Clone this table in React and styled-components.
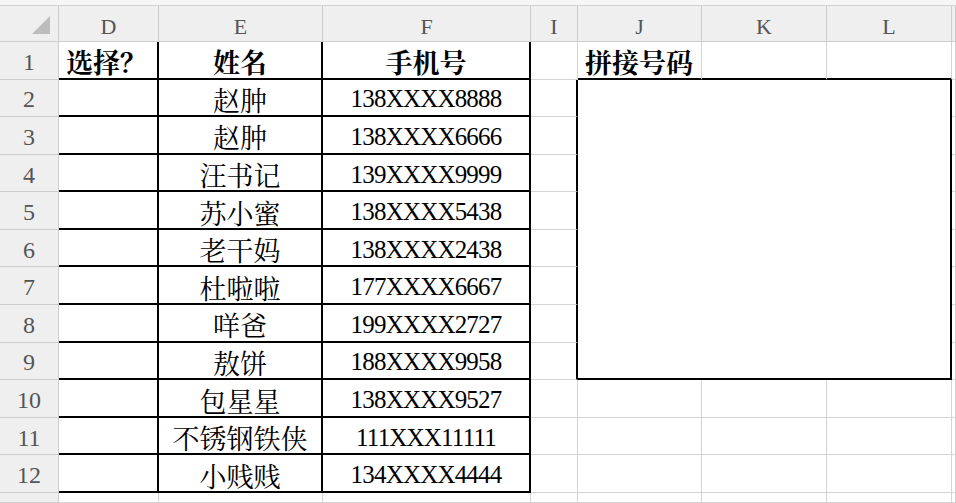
import React from "react";
import styled, { createGlobalStyle } from "styled-components";

const Global = createGlobalStyle`
  html, body { margin: 0; padding: 0; background: #ffffff; }
  body { width: 956px; height: 503px; overflow: hidden; }
`;

const CELL_FONT = `"Liberation Serif", "Noto Serif CJK SC", "Noto Sans CJK SC", serif`;
const GRID = "#d4d4d4";
const HEAD_LINE = "#cdcdcd";

const Page = styled.div`
  width: 956px;
  height: 503px;
  display: flex;
  flex-direction: column;
  background: #fff;
  overflow: hidden;
`;

const TopStrip = styled.div`
  height: 5px;
  flex: none;
  background: #f6f6f6;
  border-bottom: 1px solid #d2d2d2;
`;

const Sheet = styled.div`
  flex: 1;
  display: grid;
  grid-template-columns: 59px 100px 164px 208px 47px 124px 125px 125px 1fr;
  grid-template-rows: 36px repeat(12, 37.58px) 1fr;
`;

const Corner = styled.div`
  box-sizing: border-box;
  background: #efefef;
  border-right: 1px solid ${HEAD_LINE};
  border-bottom: 1px solid ${HEAD_LINE};
  display: flex;
  justify-content: flex-end;
  align-items: flex-end;
  padding: 0 8px 7px 0;
`;

const ColHead = styled.div`
  box-sizing: border-box;
  background: #efefef;
  border-right: 1px solid ${HEAD_LINE};
  border-bottom: 1px solid ${HEAD_LINE};
  display: flex;
  align-items: center;
  justify-content: center;
  padding-top: 7px;
  font-family: "Liberation Serif", serif;
  font-size: 22px;
  color: #555;
  overflow: hidden;
`;

const RowHead = styled.div`
  box-sizing: border-box;
  background: #efefef;
  border-right: 1px solid ${HEAD_LINE};
  border-bottom: 1px solid ${HEAD_LINE};
  display: flex;
  align-items: center;
  justify-content: center;
  padding-top: 4px;
  font-family: "Liberation Serif", serif;
  font-size: 24px;
  color: #555;
  overflow: hidden;
`;

const Cell = styled.div`
  box-sizing: border-box;
  border-right: ${(p) => (p.$right ? "2px solid #000" : `1px solid ${GRID}`)};
  border-bottom: ${(p) => (p.$bottom ? "2px solid #000" : `1px solid ${GRID}`)};
  display: flex;
  align-items: center;
  justify-content: ${(p) => (p.$align === "left" ? "flex-start" : "center")};
  padding: 4px 0 0 ${(p) => (p.$align === "left" ? "7px" : "0")};
  font-family: ${CELL_FONT};
  font-size: ${(p) => (p.$phone ? "25px" : "27px")};
  letter-spacing: ${(p) => (p.$phone ? "-0.8px" : "0")};
  font-weight: ${(p) => (p.$bold ? 700 : 400)};
  color: #000;
  white-space: nowrap;
  overflow: visible;
`;

const Merged = styled.div`
  box-sizing: border-box;
  grid-column: 6 / span 3;
  grid-row: 3 / span 8;
  border-right: 2px solid #000;
  border-bottom: 2px solid #000;
  background: #fff;
`;

const rows = [
  ["赵肿", "138XXXX8888"],
  ["赵肿", "138XXXX6666"],
  ["汪书记", "139XXXX9999"],
  ["苏小蜜", "138XXXX5438"],
  ["老干妈", "138XXXX2438"],
  ["杜啦啦", "177XXXX6667"],
  ["咩爸", "199XXXX2727"],
  ["敖饼", "188XXXX9958"],
  ["包星星", "138XXXX9527"],
  ["不锈钢铁侠", "111XXX11111"],
  ["小贱贱", "134XXXX4444"],
];

const columns = ["D", "E", "F", "I", "J", "K", "L", ""];

export default function App() {
  return (
    <Page>
      <Global />
      <TopStrip />
      <Sheet>
        <Corner>
          <svg width="18" height="18" viewBox="0 0 18 18">
            <polygon points="18,0 18,18 0,18" fill="#bdbdbd" />
          </svg>
        </Corner>
        {columns.map((c, i) => (
          <ColHead key={i}>{c}</ColHead>
        ))}

        <RowHead>1</RowHead>
        <Cell $align="left" $bold $right $bottom>
          选择？
        </Cell>
        <Cell $bold $right $bottom>姓名</Cell>
        <Cell $bold $right $bottom>手机号</Cell>
        <Cell />
        <Cell $align="left" $bold $bottom>拼接号码</Cell>
        <Cell $bottom />
        <Cell $bottom />
        <Cell />

        {rows.map(([name, phone], i) => {
          const r = i + 2;
          const inBox = r >= 2 && r <= 9;
          return (
            <React.Fragment key={r}>
              <RowHead>{r}</RowHead>
              <Cell $right $bottom />
              <Cell $right $bottom>{name}</Cell>
              <Cell $phone $right $bottom>{phone}</Cell>
              <Cell $right={inBox} />
              {r === 2 && <Merged />}
              {!inBox && (
                <>
                  <Cell />
                  <Cell />
                  <Cell />
                </>
              )}
              <Cell />
            </React.Fragment>
          );
        })}

        <RowHead />
        <Cell />
        <Cell />
        <Cell />
        <Cell />
        <Cell />
        <Cell />
        <Cell />
        <Cell />
      </Sheet>
    </Page>
  );
}
